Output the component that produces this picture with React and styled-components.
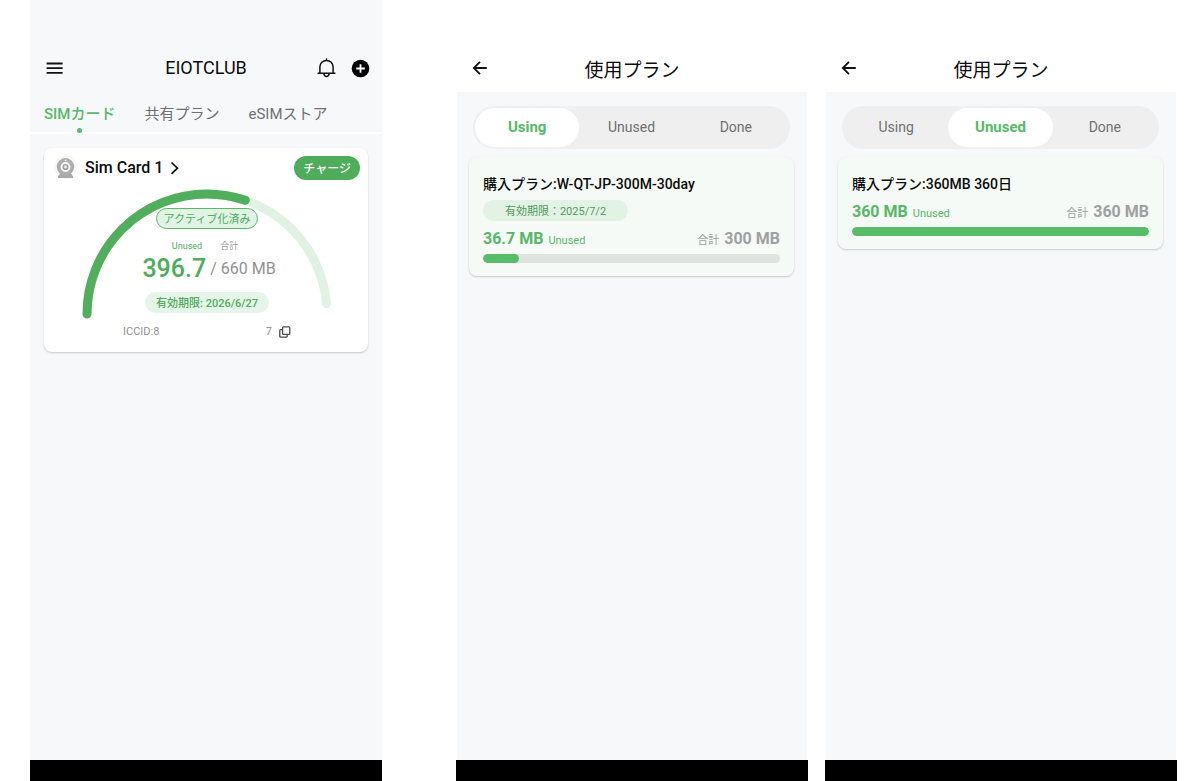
import React from 'react';
import styled, { createGlobalStyle } from 'styled-components';

const GlobalStyle = createGlobalStyle`
    * {
        box-sizing: border-box;
    }

    body {
        margin: 0;
        background: #ffffff;
        font-family: Roboto, "Noto Sans CJK JP", sans-serif;
        color: #0c0c0c;
    }

    button {
        margin: 0;
        padding: 0;
        border: none;
        background: none;
        font: inherit;
        color: inherit;
        cursor: pointer;
    }

    h1, h2, p {
        margin: 0;
    }

    svg {
        display: block;
    }
`;

const Page = styled.div`
    display: flex;
    gap: 17px;
    min-height: 100vh;
    padding: 0 23px 0 30px;
`;

// one phone screen
const Phone = styled.section`
    flex: 1;
    min-width: 0;
    display: flex;
    flex-direction: column;
    background: ${props => (props.$tinted ? '#f6f8fa' : '#ffffff')};
    margin-right: ${props => (props.$apart ? '57px' : '0')};
`;

const Header = styled.header`
    display: grid;
    grid-template-columns: 1fr auto 1fr;
    align-items: center;
    height: 92px;
    padding: 44px 12px 0 14px;
`;

const Title = styled.h1`
    padding: ${props => (props.$large ? '6px 2px 0 0' : '0 2px 0 0')};
    font-size: ${props => (props.$large ? '19px' : '18px')};
    font-weight: 400;
    line-height: 28px;
`;

const Actions = styled.div`
    display: flex;
    justify-content: flex-end;
    align-items: center;
    gap: 14px;
`;

const IconButton = styled.button`
    justify-self: start;
`;

const Body = styled.main`
    flex: 1;
    margin: 0 1px;
    padding: ${props => (props.$home ? '14px 13px' : '14px 13px 14px 12px')};
    background: #f6f8fa;
`;

// black system bar at the bottom
const SystemBar = styled.footer`
    height: 21px;
    background: #000000;
`;

/* ---------- home ---------- */

const Tabs = styled.nav`
    display: flex;
    gap: 29px;
    padding: 10px 14px 0;
    border-bottom: 2px solid #ffffff;
`;

const Tab = styled.button`
    display: flex;
    flex-direction: column;
    align-items: center;
    font-size: 15px;
    line-height: 24px;
    font-weight: ${props => (props.$active ? '500' : '400')};
    color: ${props => (props.$active ? '#56b868' : '#707070')};
    white-space: nowrap;

    &::after {
        content: "";
        width: 5px;
        height: 5px;
        margin: 2px 0 -1px;
        border-radius: 50%;
        background: ${props => (props.$active ? '#56b878' : 'transparent')};
    }
`;

const SimCard = styled.article`
    padding: 8px 8px 13px 10px;
    border-radius: 8px;
    background: #ffffff;
    box-shadow: 0 1px 2px rgba(0, 0, 0, 0.2);
`;

const SimHead = styled.div`
    display: flex;
    justify-content: space-between;
    align-items: center;
`;

const SimName = styled.button`
    display: flex;
    align-items: center;
    gap: 7px;
    font-size: 16px;
    font-weight: 500;
    line-height: 24px;
`;

const ChargeButton = styled.button`
    height: 24px;
    padding: 0 9px;
    border-radius: 12px;
    background: #4eac5b;
    color: #ffffff;
    font-size: 12px;
    font-weight: 500;
    line-height: 26px;
`;

// the arc and the figures share one grid cell
const Gauge = styled.div`
    display: grid;
    justify-items: center;

    > * {
        grid-area: 1 / 1;
    }
`;

const GaugeInfo = styled.div`
    display: flex;
    flex-direction: column;
    align-items: center;
    padding-top: 28px;
`;

const Status = styled.span`
    height: 21px;
    padding: 0 7px;
    border: 1px solid #5cb56a;
    border-radius: 11px;
    background: #e0f3e5;
    color: #4eac5b;
    font-size: 11px;
    line-height: 21px;
`;

const Labels = styled.div`
    display: flex;
    gap: 18px;
    margin-top: 11px;
    padding-right: 4px;
    font-size: 9px;
    line-height: 12px;
    color: #9a9a9a;
`;

const Green = styled.span`
    color: #4eac5b;
`;

const Amount = styled.p`
    display: flex;
    align-items: center;
    gap: 4px;
    margin-top: 3px;
    padding-left: 4px;
    font-size: 16px;
    line-height: 28px;
    color: #929292;
`;

const Big = styled.strong`
    font-size: 25px;
    font-weight: 500;
    color: #4eac5b;
`;

const Expiry = styled.span`
    height: 21px;
    margin-top: 9px;
    padding: 0 11px;
    border-radius: 11px;
    background: #e6f5ea;
    color: #4eac5b;
    font-size: 11px;
    font-weight: 500;
    line-height: 23px;
`;

const Iccid = styled.div`
    display: flex;
    align-items: center;
    width: 168px;
    margin-top: 12px;
    font-size: 11px;
    line-height: 14px;
    color: #8f8f8f;

    button {
        margin-left: 7px;
    }
`;

const Spacer = styled.span`
    flex: 1;
`;

/* ---------- plans ---------- */

const Segments = styled.div`
    display: grid;
    grid-template-columns: repeat(3, 1fr);
    margin: 0 4px;
    padding: 2px;
    border-radius: 21px;
    background: #efefef;
`;

const Segment = styled.button`
    height: 39px;
    padding-bottom: 2px;
    border-radius: 20px;
    background: ${props => (props.$active ? '#ffffff' : 'transparent')};
    color: ${props => (props.$active ? '#56b868' : '#707070')};
    font-size: ${props => (props.$active ? '15px' : '14px')};
    font-weight: ${props => (props.$active ? '700' : '400')};
`;

const PlanCard = styled.article`
    margin-top: 8px;
    padding: 17px 14px 13px;
    border-radius: 8px;
    background: #f5faf6;
    box-shadow: 0 1px 2px rgba(0, 0, 0, 0.2);
`;

const PlanName = styled.h2`
    font-size: 14px;
    font-weight: 500;
    line-height: 20px;
`;

const PlanExpiry = styled.p`
    width: 145px;
    height: 21px;
    margin: 6px 0 0;
    border-radius: 11px;
    background: #e2f3e6;
    color: #539a5f;
    font-size: 11px;
    line-height: 23px;
    text-align: center;
`;

const Usage = styled.div`
    display: flex;
    justify-content: space-between;
    margin-top: 8px;
    line-height: 20px;
`;

const Quota = styled.p`
    display: flex;
    align-items: baseline;
    gap: 5px;
    font-size: 11px;
    color: ${props => (props.$left ? '#56b868' : '#a0a0a0')};

    strong {
        font-size: 16px;
        font-weight: 700;
    }
`;

const Track = styled.div`
    height: 9px;
    margin-top: 3px;
    border-radius: 5px;
    background: #dfe2df;
    overflow: hidden;
`;

const Fill = styled.div`
    height: 100%;
    border-radius: 5px;
    background: #58bc69;
`;

/* ---------- icons ---------- */

const MenuIcon = () => (
    <svg width="20" height="20" viewBox="0 0 20 20" stroke="#111" strokeWidth="1.8">
        <path d="M2.6 5.5h16M2.6 10.2h16M2.6 14.9h16" />
    </svg>
);

const BellIcon = () => (
    <svg width="20" height="20" viewBox="0 0 20 20" fill="none" stroke="#111" strokeWidth="1.5" strokeLinecap="round">
        <path d="M9.5 1v1.2M1.1 15.2h16.8M2.9 15V9a6.6 6.6 0 0 1 13.2 0v6M6.8 15.6c.3 1.8 1.3 2.8 2.7 2.8s2.4-1 2.7-2.8" />
    </svg>
);

const PlusIcon = () => (
    <svg width="19" height="19" viewBox="0 0 19 19">
        <circle cx="9.5" cy="9.5" r="8.8" fill="#000" />
        <path d="M9.5 5.2v8.6M5.2 9.5h8.6" stroke="#fff" strokeWidth="1.8" />
    </svg>
);

const BackIcon = () => (
    <svg width="20" height="20" viewBox="0 0 20 20" fill="none" stroke="#111" strokeWidth="1.8">
        <path d="M16.8 10H4M10 3.8L3.8 10l6.2 6.2" />
    </svg>
);

const CameraIcon = () => (
    <svg width="24" height="24" viewBox="0 0 24 24">
        <circle cx="11.5" cy="11.5" r="11.5" fill="#f7f7f7" />
        <path d="M6 17.5h11l2 3v1.5h-15v-1.5z" fill="#a8a8a8" />
        <circle cx="11.5" cy="10.8" r="8.7" fill="#adadad" />
        <circle cx="11.5" cy="11" r="4" fill="#a0a0a0" stroke="#fff" strokeWidth="1.8" />
        <circle cx="11.5" cy="11" r="1.4" fill="#f0f0f0" />
        <circle cx="11.5" cy="4.4" r="0.8" fill="#fff" />
    </svg>
);

const ChevronIcon = () => (
    <svg width="9" height="14" viewBox="0 0 9 14" fill="none" stroke="#111" strokeWidth="1.7">
        <path d="M1.5 1.5L7.4 7.2l-5.9 5.6" />
    </svg>
);

const CopyIcon = () => (
    <svg width="12" height="12" viewBox="0 0 12 12" fill="none" stroke="#4a4a4a" strokeWidth="1.3">
        <rect x="3.6" y="0.8" width="7.2" height="7.6" rx="1" />
        <path d="M3.6 3.6H1.7a.9.9 0 0 0-.9.9v5.8a.9.9 0 0 0 .9.9h5.6a.9.9 0 0 0 .9-.9V8.6" />
    </svg>
);

const Arc = () => (
    <svg width="252" height="140" viewBox="0 0 252 140" fill="none" strokeWidth="9" strokeLinecap="round">
        <path d="M6 134A120 120 0 0 1 126 14A120 120 0 0 1 245.5 123.5" stroke="#dff2e4" />
        <path d="M6 134A120 120 0 0 1 126 14A120 120 0 0 1 164.3 20.3" stroke="#50ae5d" />
    </svg>
);

/* ---------- screens ---------- */

const HomeScreen = () => (
    <Phone $tinted $apart>
        <Header>
            <IconButton aria-label="menu"><MenuIcon /></IconButton>
            <Title>EIOTCLUB</Title>
            <Actions>
                <IconButton aria-label="notifications"><BellIcon /></IconButton>
                <IconButton aria-label="add"><PlusIcon /></IconButton>
            </Actions>
        </Header>
        <Tabs>
            <Tab $active>SIMカード</Tab>
            <Tab>共有プラン</Tab>
            <Tab>eSIMストア</Tab>
        </Tabs>
        <Body $home>
            <SimCard>
                <SimHead>
                    <SimName>
                        <CameraIcon />
                        Sim Card 1
                        <ChevronIcon />
                    </SimName>
                    <ChargeButton>チャージ</ChargeButton>
                </SimHead>
                <Gauge>
                    <Arc />
                    <GaugeInfo>
                        <Status>アクティブ化済み</Status>
                        <Labels>
                            <Green>Unused</Green>
                            <span>合計</span>
                        </Labels>
                        <Amount>
                            <Big>396.7</Big>
                            <span>/ 660 MB</span>
                        </Amount>
                        <Expiry>有効期限: 2026/6/27</Expiry>
                        <Iccid>
                            <span>ICCID:8</span>
                            <Spacer />
                            <span>7</span>
                            <button aria-label="copy"><CopyIcon /></button>
                        </Iccid>
                    </GaugeInfo>
                </Gauge>
            </SimCard>
        </Body>
        <SystemBar />
    </Phone>
);

const segments = ['Using', 'Unused', 'Done'];

const PlanScreen = ({ active, plan }) => (
    <Phone>
        <Header>
            <IconButton aria-label="back"><BackIcon /></IconButton>
            <Title $large>使用プラン</Title>
        </Header>
        <Body>
            <Segments>
                {segments.map(name => (
                    <Segment key={name} $active={name === active}>{name}</Segment>
                ))}
            </Segments>
            <PlanCard>
                <PlanName>購入プラン:{plan.name}</PlanName>
                {plan.expires && <PlanExpiry>有効期限：{plan.expires}</PlanExpiry>}
                <Usage>
                    <Quota $left><strong>{plan.left} MB</strong> Unused</Quota>
                    <Quota>合計 <strong>{plan.total} MB</strong></Quota>
                </Usage>
                <Track>
                    <Fill style={{ width: `${(plan.left / plan.total) * 100}%` }} />
                </Track>
            </PlanCard>
        </Body>
        <SystemBar />
    </Phone>
);

const App = () => (
    <>
        <GlobalStyle />
        <Page>
            <HomeScreen />
            <PlanScreen
                active="Using"
                plan={{ name: 'W-QT-JP-300M-30day', expires: '2025/7/2', left: 36.7, total: 300 }}
            />
            <PlanScreen
                active="Unused"
                plan={{ name: '360MB 360日', left: 360, total: 360 }}
            />
        </Page>
    </>
);

export default App;
